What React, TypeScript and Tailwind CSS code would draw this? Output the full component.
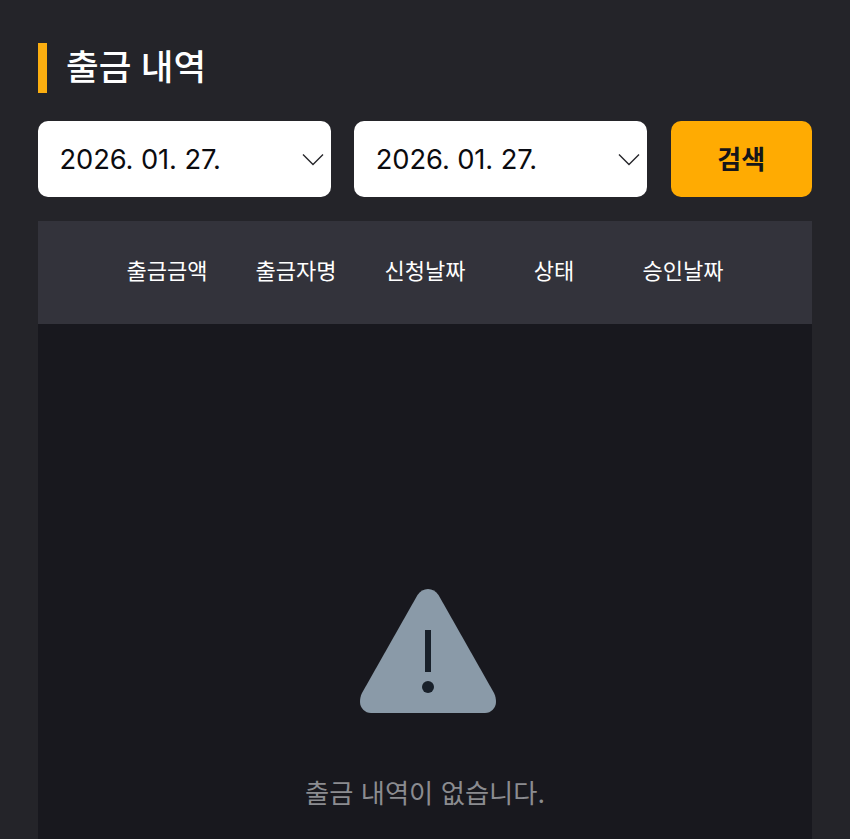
const columns = ['출금금액', '출금자명', '신청날짜', '상태', '승인날짜']

const DateSelect = ({ value }: { value: string }) => (
  <div className="flex h-[76px] w-[292.6px] items-center justify-between rounded-[10px] bg-white pl-[21.5px] pr-[7px]">
    <span className="pt-[2px] text-[27.300px] leading-none tracking-[-0.1px] text-[#0b0b0f]">{value}</span>
    <svg width="24" height="24" viewBox="0 0 24 24" fill="none" stroke="#26262b" strokeWidth="1.4">
      <path d="M3 7.500 13 17.500 23 7.500" />
    </svg>
  </div>
)

export default function App() {
  return (
    <div
      className="h-[839px] overflow-hidden bg-[#242429] px-[38px] pt-[43px]"
      style={{ fontFamily: 'Inter, "Noto Sans CJK KR", sans-serif' }}
    >
      <div className="flex h-[50px] items-center border-l-[9px] border-[#fbae10] pl-[19px]">
        <h1 className="text-[35.500px] font-medium leading-none text-white">출금 내역</h1>
      </div>

      <div className="mt-[28px] flex gap-[23.7px]">
        <DateSelect value="2026. 01. 27." />
        <DateSelect value="2026. 01. 27." />
        <button className="h-[76px] flex-1 rounded-[10px] bg-[#ffab02] text-[26px] font-semibold text-[#15151a]">
          검색
        </button>
      </div>

      <div className="mt-[24px] flex h-[103px] items-center justify-center bg-[#33333b] pb-[3px]">
        {columns.map((col) => (
          <div key={col} className="w-[129px] text-center text-[22px] text-white">
            {col}
          </div>
        ))}
      </div>

      <div className="flex h-[516px] flex-col items-center bg-[#18181e] pt-[265px]">
        <svg className="ml-[6px]" width="136" height="124" viewBox="0 0 136 124">
          <path
            d="M68 0C72 0 76 2 78.500 6L134 104C135.500 107 136 110 136 113C136 119 131 124 125 124H11C5 124 0 119 0 113C0 110 .5 107 2 104L57.500 6C60 2 64 0 68 0Z"
            fill="#8a9aa8"
          />
          <rect x="65" y="41" width="6" height="42" fill="#18202a" />
          <circle cx="68" cy="98" r="6" fill="#18202a" />
        </svg>
        <p className="mt-[68px] text-[26.300px] leading-none text-[#8b8c90]">출금 내역이 없습니다.</p>
      </div>
    </div>
  )
}
